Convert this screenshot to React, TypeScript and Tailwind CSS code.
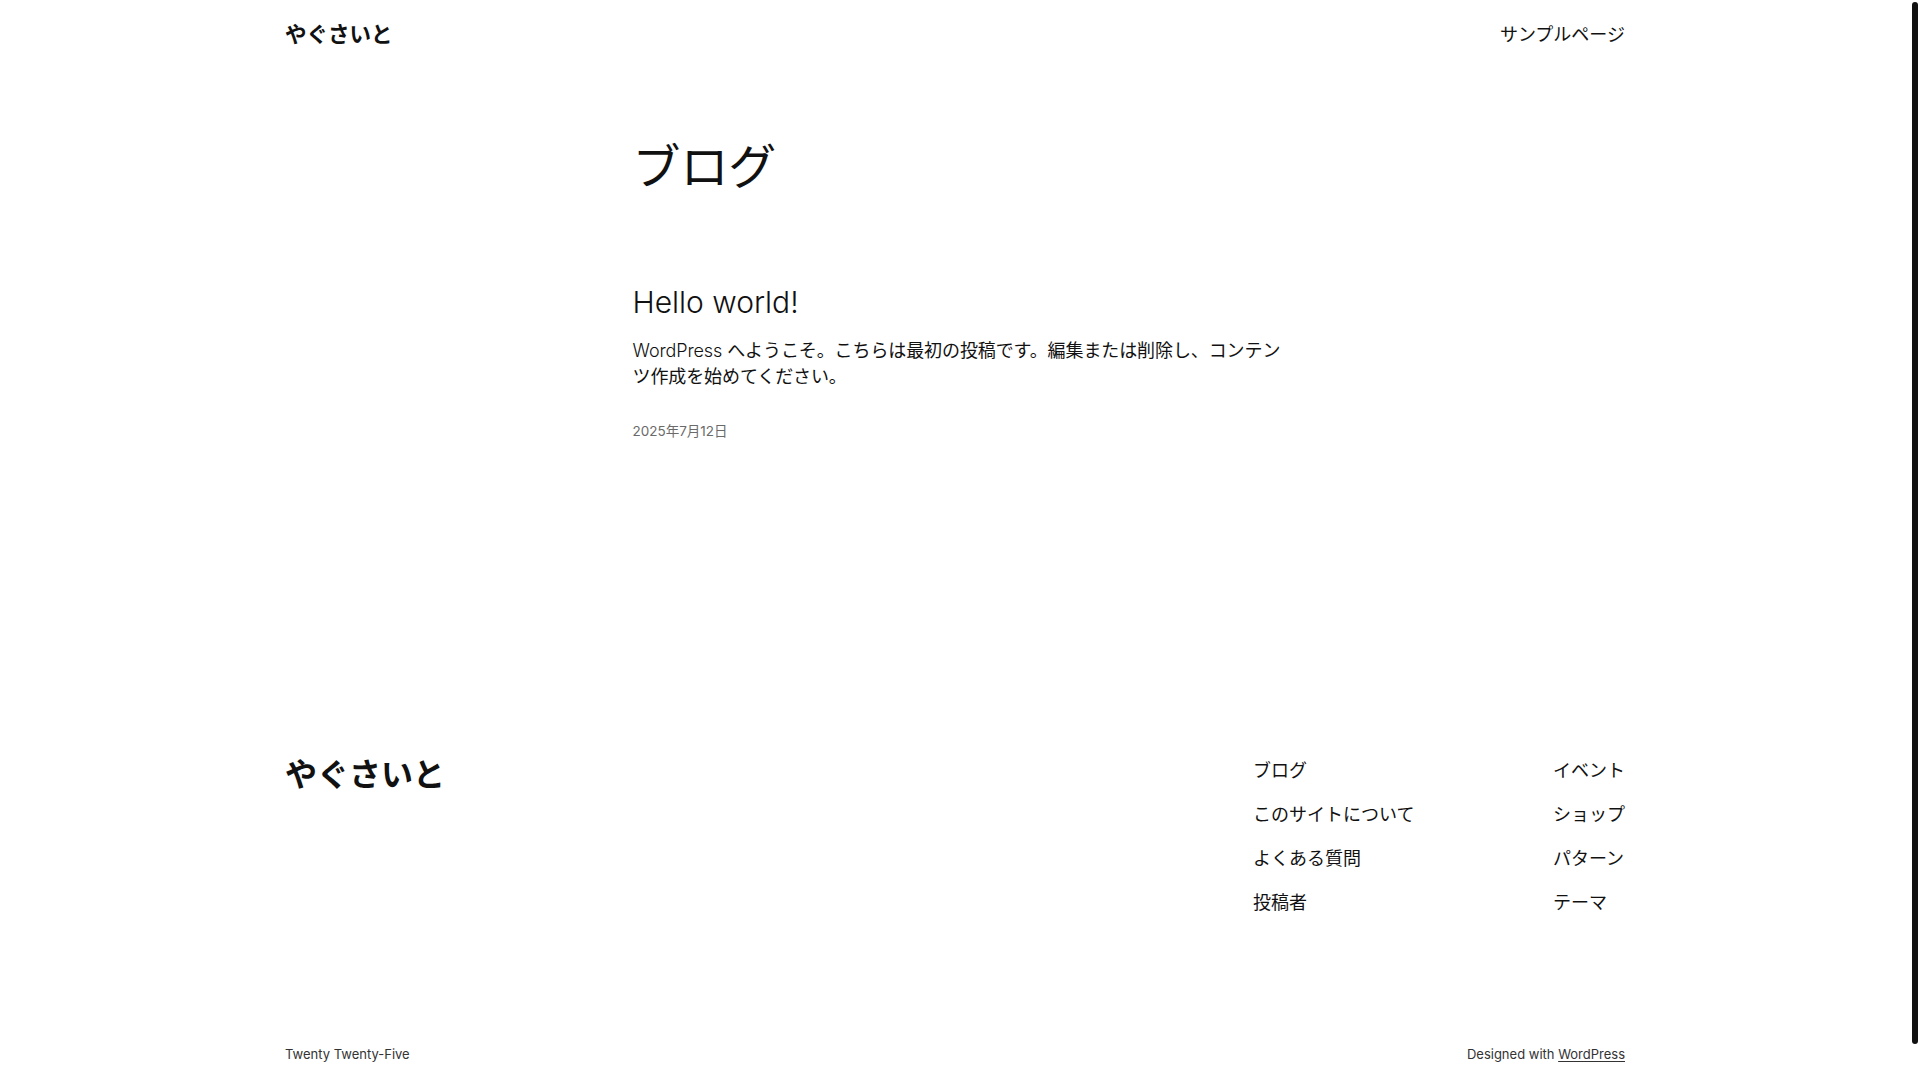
const footerLeft = ["ブログ", "このサイトについて", "よくある質問", "投稿者"];
const footerRight = ["イベント", "ショップ", "パターン", "テーマ"];

function FooterNav({ items }: { items: string[] }) {
  return (
    <ul className="flex flex-col gap-[17px]">
      {items.map((item) => (
        <li key={item}>
          <a href="#" className="text-[18px] leading-[27px] text-[#111111]">
            {item}
          </a>
        </li>
      ))}
    </ul>
  );
}

export default function App() {
  return (
    <div className="relative h-[1080px] w-full overflow-hidden bg-white text-[#111111] font-[family-name:Inter,'Noto_Sans_CJK_JP',sans-serif]">
      <div className="w-[1910px]">
        {/* Header */}
        <header className="mx-auto flex h-[68px] w-[1340px] items-center justify-between">
          <a href="#" className="text-[21.5px] font-semibold leading-[28px]">
            やぐさいと
          </a>
          <nav>
            <a href="#" className="text-[18px] leading-[27px]">
              サンプルページ
            </a>
          </nav>
        </header>

        {/* Main */}
        <main className="mx-auto w-[645px] pt-[72px]">
          <h1 className="text-[48px] font-normal leading-[54px] tracking-[-0.1px]">ブログ</h1>

          <article className="mt-[90px]">
            <h2 className="text-[30px] font-light leading-[36px]">
              <a href="#">Hello world!</a>
            </h2>
            <p className="mt-[18px] whitespace-nowrap text-[18px] leading-[26px] tracking-[-0.1px]">
              <span className="font-light">WordPress</span> へようこそ。こちらは最初の投稿です。編集または削除し、コンテン
              <br />
              ツ作成を始めてください。
            </p>
            <div className="mt-[31px] text-[13.5px] leading-[20px] text-[#6a6a6a]">
              2025年7月12日
            </div>
          </article>
        </main>

        {/* Footer */}
        <footer className="mx-auto mt-[316px] w-[1340px]">
          <div className="flex items-start justify-between">
            <a href="#" className="text-[32px] font-semibold leading-[36px]">
              やぐさいと
            </a>
            <div className="flex w-[372px] justify-between">
              <FooterNav items={footerLeft} />
              <FooterNav items={footerRight} />
            </div>
          </div>

          <div className="mt-[128px] flex items-center justify-between text-[13px] leading-[20px] text-[#333333]">
            <p>Twenty Twenty-Five</p>
            <p>
              Designed with{" "}
              <a href="#" className="underline underline-offset-2">
                WordPress
              </a>
            </p>
          </div>
        </footer>
      </div>

      {/* overlay scrollbar thumb */}
      <div className="absolute right-[2px] top-[2px] h-[1042px] w-[6px] rounded-full bg-[#111111]" />
    </div>
  );
}
